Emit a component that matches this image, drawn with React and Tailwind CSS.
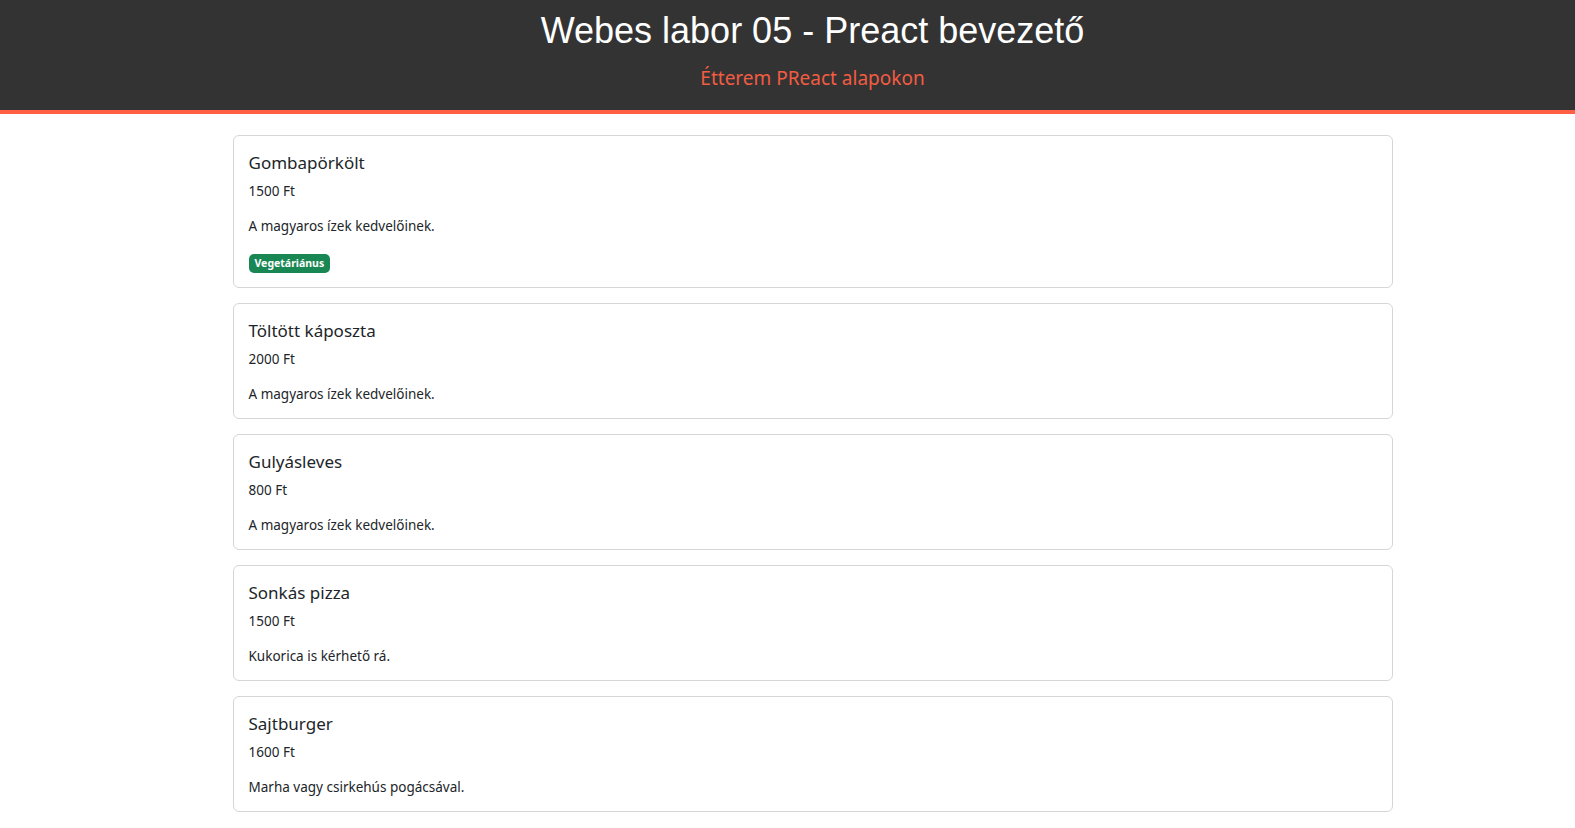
export default function App() {
  const items = [
    { name: "Gombapörkölt", price: "1500 Ft", desc: "A magyaros ízek kedvelőinek.", veg: true },
    { name: "Töltött káposzta", price: "2000 Ft", desc: "A magyaros ízek kedvelőinek." },
    { name: "Gulyásleves", price: "800 Ft", desc: "A magyaros ízek kedvelőinek." },
    { name: "Sonkás pizza", price: "1500 Ft", desc: "Kukorica is kérhető rá." },
    { name: "Sajtburger", price: "1600 Ft", desc: "Marha vagy csirkehús pogácsával." },
  ];
  return (
    <div className="w-full overflow-hidden bg-white" style={{ fontFamily: '"Noto Sans", sans-serif' }}>
      <div className="w-[1625px]">
        <header className="bg-[#333333] border-b-4 border-[#ff5f45] h-[114px] flex flex-col items-center">
          <h1 className="text-white text-[36px] leading-none mt-[13px]" style={{ fontFamily: '"Liberation Sans", Arial, sans-serif' }}>
            Webes labor 05 - Preact bevezető
          </h1>
          <div className="text-[#f25c42] text-[19px] mt-[20px] leading-none">Étterem PReact alapokon</div>
        </header>
        <main className="w-[1160px] mx-auto mt-[21px] flex flex-col gap-[15px] text-[#212529]">
          {items.map((it) => (
            <div key={it.name} className="border border-[#d6d6d6] rounded-[6px] px-[15px] pt-[15px] pb-[14px]">
              <div className="text-[17px] leading-[24px]">{it.name}</div>
              <div className="text-[13.5px] leading-[20px] mt-[6px]">{it.price}</div>
              <div className="text-[13.5px] leading-[20px] mt-[15px]">{it.desc}</div>
              {it.veg && (
                <div className="mt-[18px] flex">
                  <span className="bg-[#198754] text-white text-[10.5px] font-bold leading-none px-[6px] py-[4px] rounded-[5px]">
                    Vegetáriánus
                  </span>
                </div>
              )}
            </div>
          ))}
        </main>
      </div>
    </div>
  );
}
